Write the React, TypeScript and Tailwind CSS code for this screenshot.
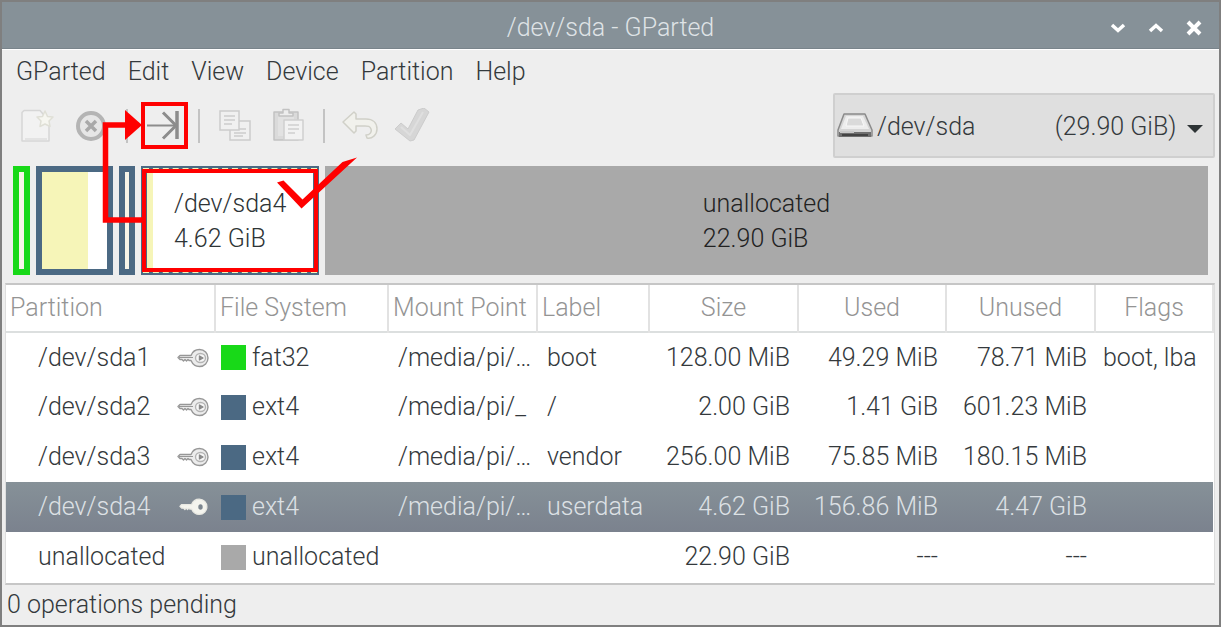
import React from 'react';

type Row = {
  partition: string;
  locked: boolean;
  fs: string;
  color: string;
  mount: string;
  label: string;
  size: string;
  used: string;
  unused: string;
  flags: string;
  selected?: boolean;
};

const menus = ['GParted', 'Edit', 'View', 'Device', 'Partition', 'Help'];

const rows: Row[] = [
  { partition: '/dev/sda1', locked: true, fs: 'fat32', color: 'bg-[#18d918]', mount: '/media/pi/…', label: 'boot', size: '128.00 MiB', used: '49.29 MiB', unused: '78.71 MiB', flags: 'boot, lba' },
  { partition: '/dev/sda2', locked: true, fs: 'ext4', color: 'bg-[#4b6983]', mount: '/media/pi/_', label: '/', size: '2.00 GiB', used: '1.41 GiB', unused: '601.23 MiB', flags: '' },
  { partition: '/dev/sda3', locked: true, fs: 'ext4', color: 'bg-[#4b6983]', mount: '/media/pi/…', label: 'vendor', size: '256.00 MiB', used: '75.85 MiB', unused: '180.15 MiB', flags: '' },
  { partition: '/dev/sda4', locked: true, fs: 'ext4', color: 'bg-[#4b6983]', mount: '/media/pi/…', label: 'userdata', size: '4.62 GiB', used: '156.86 MiB', unused: '4.47 GiB', flags: '', selected: true },
  { partition: 'unallocated', locked: false, fs: 'unallocated', color: 'bg-[#a9a9a9]', mount: '', label: '', size: '22.90 GiB', used: '---', unused: '---', flags: '' }
];

const columns = [
  { title: 'Partition', className: 'w-[209px] pl-1 text-left' },
  { title: 'File System', className: 'w-[173px] pl-1 text-left' },
  { title: 'Mount Point', className: 'w-[149px] pl-1 text-left' },
  { title: 'Label', className: 'w-[112px] pl-1 text-left' },
  { title: 'Size', className: 'w-[149px] text-center' },
  { title: 'Used', className: 'w-[148px] text-center' },
  { title: 'Unused', className: 'w-[149px] text-center' },
  { title: 'Flags', className: 'text-center' }
];

const KeyIcon = ({ selected }: { selected?: boolean }) => (
  <svg className="w-8 h-6" viewBox="0 0 32 24" fill={selected ? '#f4f4ee' : '#ececec'} stroke={selected ? '#e8e8e2' : '#979797'} strokeWidth="1.4" strokeLinejoin="round">
    <path d="M1 11.500 3 9.500H14C15.500 5.500 18.500 3.500 22.500 3.500C27.500 3.500 31 7.500 31 12S27.500 20.500 22.500 20.500C18.500 20.500 15.500 18 14 14.500H12L11 13.500 9.500 15 8 13.500 6.500 15 5 13.500H3Z" transform={selected ? 'translate(2 1) scale(.9)' : undefined} />
    {!selected && <path d="M2 11.500H16" strokeWidth="1" fill="none" />}
    <ellipse cx="23.500" cy="12" rx={selected ? 1.5 : 5} ry={selected ? 2 : 4.5} fill={selected ? '#7b858e' : '#f7f7f7'} stroke={selected ? '#7b858e' : '#b4b4b4'} />
    {!selected && <path d="M22.500 10 26 12 22.500 14Z" fill="#8a8a8a" stroke="#8a8a8a" />}
  </svg>
);

const NewIcon = () => (
  <svg className="w-9 h-9" viewBox="0 0 36 36" fill="#f2f2f2" stroke="#d6d6d6" strokeWidth="1.5" strokeLinejoin="round">
    <path d="M5 2.500H21L30 13V33H3V4.500Z" />
    <path d="M6 31H28" stroke="#dedede" />
    <path d="M26 3 28.500 8.500 34 9 30 13 31 18.500 26 16 21 18.500 22 13 18 9 23.500 8.500Z" fill="#f6f6f0" stroke="#dfdfd6" />
  </svg>
);

const DeleteIcon = () => (
  <svg className="w-9 h-9" viewBox="0 0 36 36" fill="none">
    <circle cx="18" cy="18" r="13" fill="#e6e6e6" stroke="#b4b4b4" strokeWidth="4" />
    <path d="M13 13 23 23M23 13 13 23" stroke="#a9a9a9" strokeWidth="3.500" />
  </svg>
);

const ResizeIcon = () => (
  <svg className="w-9 h-9" viewBox="0 0 36 36" fill="none" stroke="#8c8c8c" strokeWidth="2">
    <path d="M2 17.500H31" />
    <path d="M18 4.500 31 17.500 18 30.500" strokeWidth="3" />
    <path d="M32 3V31" strokeWidth="3.500" />
  </svg>
);

const CopyIcon = () => (
  <svg className="w-9 h-9" viewBox="0 0 36 36" fill="#f0f0f0" stroke="#cbcbcb" strokeWidth="1.500">
    <path d="M13 13H33V32H13Z" />
    <path d="M17 21H29M17 25H29M17 28H26" />
    <path d="M3 3H22V22H3Z" />
    <path d="M7 8H18M7 12H18M7 16H15" />
  </svg>
);

const PasteIcon = () => (
  <svg className="w-9 h-9" viewBox="0 0 36 36" fill="#dadada" stroke="#c2c2c2" strokeWidth="1.500" strokeLinejoin="round">
    <path d="M4 4H28V32H4Z" />
    <path d="M8 8H24V28H8Z" stroke="none" fill="#e2e2e2" />
    <path d="M9 8V5H13V1.500H19V5H23V8Z" fill="#ededed" />
    <path d="M14 12H33V32H14Z" fill="#f2f2f2" stroke="#cfcfcf" />
    <path d="M18 17H29M18 21H29M18 25H25" stroke="#cfcfcf" />
  </svg>
);

const UndoIcon = () => (
  <svg className="w-9 h-9" viewBox="0 0 36 36" fill="#f1f1ec" stroke="#d0d0c8" strokeWidth="1.500" strokeLinejoin="round">
    <path d="M1 14 12 4 14 6V11H24C31 11 35 15 35 21C35 27 30 31 25 30L24 27C28 27 30 24 29 21C28 18 26 18 23 18H14V23L12 25Z" />
  </svg>
);

const ApplyIcon = () => (
  <svg className="w-10 h-9" viewBox="0 0 40 36" fill="#d6d6d6" stroke="#cccccc" strokeWidth="1" strokeLinejoin="round">
    <path d="M0 21 6 15 13 21 23 2 29 0 34 4 19 32 15 33Z" />
    <path d="M6 19 15 27 28 4" fill="none" stroke="#dfdfdf" strokeWidth="2" />
  </svg>
);

const DriveIcon = () => (
  <svg className="w-9 h-7" viewBox="0 0 36 28">
    <path d="M7 2H28L35 18V24H1V18Z" fill="#d5d5d5" stroke="#8b8b8b" strokeWidth="1.500" strokeLinejoin="round" />
    <path d="M9 4H26L32 17H4Z" fill="#ededed" />
    <path d="M11 6H24L27 14H9Z" fill="#dadada" stroke="#f8f8f8" />
    <path d="M2 20H34V25H2Z" fill="#6f6f6f" />
    <path d="M3 20H17" stroke="#c8c8c8" strokeWidth="2" />
    <path d="M5 23H31" stroke="#444444" strokeWidth="2" />
  </svg>
);

const Separator = () => <div className="w-0.5 h-[34px] bg-[#c3c3c3]" />;

const ToolButton = ({ label, children }: { label: string; children: React.ReactNode }) => (
  <button type="button" aria-label={label} className="flex items-center justify-center">
    {children}
  </button>
);

const TitleBar = () => (
  <header className="relative flex items-center justify-center h-[47px] pt-1.5 bg-[#869198] border-b border-[#79848b] text-[#dfe3e6]">
    <h1 className="font-light">/dev/sda - GParted</h1>
    <div className="absolute right-[15px] inset-y-0 pt-1.5 flex items-center gap-[18px]">
      <button type="button" aria-label="Minimize">
        <svg className="w-5 h-5" viewBox="0 0 20 20" fill="none" stroke="#ffffff" strokeWidth="3.500"><path d="M4 7 10 12.500 16 7" /></svg>
      </button>
      <button type="button" aria-label="Maximize">
        <svg className="w-5 h-5" viewBox="0 0 20 20" fill="none" stroke="#ffffff" strokeWidth="3.500"><path d="M4 13 10 7.500 16 13" /></svg>
      </button>
      <button type="button" aria-label="Close">
        <svg className="w-5 h-5" viewBox="0 0 20 20" fill="none" stroke="#ffffff" strokeWidth="4"><path d="M4 4 16 16M16 4 4 16" /></svg>
      </button>
    </div>
  </header>
);

const Toolbar = () => (
  <div className="flex items-center justify-between h-[65px] pl-[17px] pr-1">
    <div className="flex items-center">
      <ToolButton label="New"><NewIcon /></ToolButton>
      <div className="flex items-center ml-[18px] gap-[17px]">
        <ToolButton label="Delete"><DeleteIcon /></ToolButton>
        <Separator />
        <ToolButton label="Resize/Move"><ResizeIcon /></ToolButton>
        <Separator />
        <ToolButton label="Copy"><CopyIcon /></ToolButton>
        <ToolButton label="Paste"><PasteIcon /></ToolButton>
        <Separator />
        <ToolButton label="Undo"><UndoIcon /></ToolButton>
        <ToolButton label="Apply"><ApplyIcon /></ToolButton>
      </div>
    </div>
    <div className="relative w-[382px]">
      <select aria-label="Device" className="appearance-none w-full h-[65px] pt-0.5 pl-[42px] pr-8 font-light bg-[#dfdfdf] border-2 border-[#cfcfcf] rounded-xs">
        <option>{'/dev/sda' + '\u00a0'.repeat(13) + '(29.90 GiB)'}</option>
      </select>
      <div className="absolute left-1 inset-y-0 flex items-center pointer-events-none"><DriveIcon /></div>
      <svg className="absolute right-3 top-8 w-4 h-2 pointer-events-none" viewBox="0 0 16 8"><path d="M0 0H16L8 8Z" fill="#2e3436" /></svg>
    </div>
  </div>
);

const DiskGraph = () => (
  <div className="flex gap-1.5 h-[109px] mt-2 ml-[11px] mr-[11px]">
    <div className="w-[17px] border-6 border-[#18d918] bg-[#f7f5e8]" />
    <div className="w-[77px] border-6 border-[#4b6983] bg-white">
      <div className="w-[46px] h-full bg-[#f6f5b8]" />
    </div>
    <div className="w-4 border-6 border-[#4b6983] bg-[#f7f5e8]" />
    <div className="relative w-[178px] flex border-6 border-[#4b6983] bg-white">
      <div className="absolute -inset-1 border-2 border-dashed border-[#f6f5b8]" />
      <div className="w-1.5 bg-[#f6f5b8]" />
      <p className="flex-1 pl-[21px] pt-3.5 leading-[35px] text-[#2e3436] whitespace-nowrap">/dev/sda4<br />4.62 GiB</p>
    </div>
    <div className="flex-1 flex items-center justify-center bg-[#a9a9a9] text-[#222222]">
      <p className="leading-[35px]">unallocated<br />22.90 GiB</p>
    </div>
  </div>
);

// Red marks that lead from the selected partition to the Resize/Move button
const Callout = () => (
  <svg className="absolute left-0 top-0 w-[360px] h-[190px] pointer-events-none" viewBox="2 93 360 190" fill="none" stroke="#ff0000" aria-hidden="true">
    <path d="M143 104H186V147H143Z" strokeWidth="4" />
    <path d="M144 171H316V270H144Z" strokeWidth="4" />
    <path d="M143 220H105.500V125H126" strokeWidth="5.500" />
    <path d="M125 110V140L142 125Z" fill="#ff0000" stroke="none" />
    <path d="M277 182.500 283.500 180.500 302.500 199.500 342.500 162 357 157.500 301.500 208.500Z" fill="#ff0000" stroke="none" />
  </svg>
);

const PartitionTable = () => (
  <div className="mt-2 ml-[3px] mr-1 pb-px border-y-2 border-x border-y-[#c6c6c6] border-x-[#dddddd] bg-white">
    <table className="w-full table-fixed border-collapse whitespace-nowrap">
      <thead>
        <tr className="h-[47px] text-[#949494] border-b-2 border-[#dcdfdf]">
          {columns.map(c => (
            <th key={c.title} scope="col" className={`${c.className} font-light border-r-2 border-[#e2e2e2]`}>{c.title}</th>
          ))}
        </tr>
      </thead>
      <tbody>
        {rows.map(r => (
          <tr key={r.partition} className={r.selected ? 'h-[50px] bg-linear-to-b from-[#869198] to-[#7b828e] text-[#dde1e5]' : 'h-[50px]'}>
            <td className="pl-8 pr-1.5">
              <div className="flex items-center justify-between">
                {r.partition}
                {r.locked && <KeyIcon selected={r.selected} />}
              </div>
            </td>
            <td className="pl-1.5">
              <div className="flex items-center gap-1.5">
                <span className={`shrink-0 w-[25px] h-[25px] ${r.color}`} />
                {r.fs}
              </div>
            </td>
            <td className="pl-2.5">{r.mount}</td>
            <td className="pl-2.5">{r.label}</td>
            <td className="pr-2 text-right">{r.size}</td>
            <td className="pr-2 text-right">{r.used}</td>
            <td className="pr-2 text-right">{r.unused}</td>
            <td className="pl-2">{r.flags}</td>
          </tr>
        ))}
      </tbody>
    </table>
  </div>
);

const App: React.FC = () => {
  return (
    <div className="flex flex-col min-h-screen border-2 border-[#7f7f7f] bg-[#eeeeee] font-['Roboto',sans-serif] font-light text-[25px] leading-8 text-[#34393c]">
      <TitleBar />
      <nav className="flex items-center gap-[22px] h-11 pl-3.5 border-t border-white">
        {menus.map(m => (
          <button key={m} type="button">{m}</button>
        ))}
      </nav>
      <main className="relative">
        <Toolbar />
        <DiskGraph />
        <Callout />
        <PartitionTable />
      </main>
      <footer className="px-[5px] pt-1">0 operations pending</footer>
    </div>
  );
};

export default App;
